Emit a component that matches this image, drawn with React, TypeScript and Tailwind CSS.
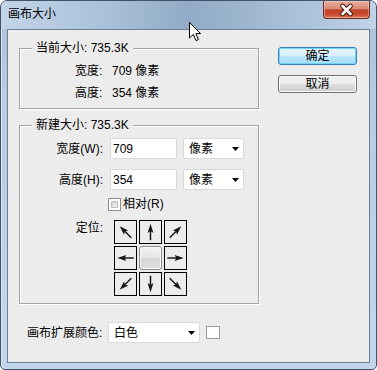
import React from 'react';

type ArrowProps = { rot: number };

const Arrow: React.FC<ArrowProps> = ({ rot }) => (
  <svg width="23" height="24" viewBox="0 0 23 24">
    <g transform={`rotate(${rot} 11.5 12)`}>
      <line x1="11.5" y1="21" x2="11.5" y2="9" stroke="#151515" strokeWidth="1.6" />
      <polygon points="11.5,3 8.3,13 11.5,11 14.7,13" fill="#151515" />
    </g>
  </svg>
);

const DropArrow = () => (
  <svg width="7" height="4" viewBox="0 0 7 4">
    <polygon points="0,0 7,0 3.5,4" fill="#000" />
  </svg>
);

const Select: React.FC<{ text: string; size: string }> = ({ text, size }) => (
  <div className={`${size} h-[21px] flex items-center justify-between rounded-[2px] border border-[#d9d9d9] bg-white pl-[5px] pr-[4px]`}>
    <span>{text}</span>
    <DropArrow />
  </div>
);

const Group: React.FC<{ title: string; height: string; children: React.ReactNode }> = ({ title, height, children }) => (
  <div className={`relative w-[240px] ${height} border border-[#a4a4a4] shadow-[inset_1px_1px_0_#fff,1px_1px_0_#fff]`}>
    <span className="absolute left-[12px] -top-[9px] px-[4px] bg-[#ececec] leading-[17px]">{title}</span>
    {children}
  </div>
);

const anchors = [-45, 0, 45, -90, null, 90, -135, 180, 135];

export default function App() {
  return (
    <div className="w-[377px] h-[370px] bg-white font-['Liberation_Sans','Noto_Sans_CJK_SC',sans-serif] text-[12px] text-black">
      <div className="relative w-[377px] h-[370px] flex flex-col rounded-t-[7px] rounded-b-[5px] border border-[#3f5268] bg-[linear-gradient(180deg,#a9c0d8_0%,#b7cce2_25%,#c3d7ec_100%)] shadow-[inset_1px_1px_0_#dbe8f5]">
        {/* title bar */}
        <div className="h-[28px] flex items-start justify-between rounded-t-[6px] bg-[linear-gradient(90deg,#c3d5e8_0%,#a7bfd7_30%,#91abc6_50%,#a3bbd4_72%,#bfd2e6_100%)]">
          <span className="ml-[7px] mt-[5px] leading-[17px]">画布大小</span>
          <div className="mr-[6px] w-[47px] h-[18px] rounded-b-[4px] border border-t-0 border-[#6b2a1c] bg-[linear-gradient(180deg,#e8ad9d_0%,#d98a74_45%,#c2432a_52%,#c64a2e_80%,#e07b5a_100%)] shadow-[inset_0_0_0_1px_rgba(255,220,210,0.45)]">
            <svg width="45" height="18" viewBox="0 0 45 18">
              <path d="M18.5 5 L26.5 13 M26.5 5 L18.5 13" stroke="#40180f" strokeWidth="4.6" strokeLinecap="round" />
              <path d="M18.5 5 L26.5 13 M26.5 5 L18.5 13" stroke="#fff" strokeWidth="2.6" strokeLinecap="round" />
            </svg>
          </div>
        </div>

        {/* client area */}
        <div className="mx-[6px] mb-[6px] flex-1 flex flex-col border border-[#6b7f95] bg-[#ececec]">
          <div className="flex">
            <div className="ml-[11px] mt-[18px] flex flex-col gap-[16px]">
              <Group title="当前大小: 735.3K" height="h-[61px]">
                <div className="pt-[11px] pl-[55px]">
                  <div className="h-[22px] flex items-center">
                    <span className="w-[37px]">宽度:</span>
                    <span>709 像素</span>
                  </div>
                  <div className="h-[22px] flex items-center">
                    <span className="w-[37px]">高度:</span>
                    <span>354 像素</span>
                  </div>
                </div>
              </Group>

              <Group title="新建大小: 735.3K" height="h-[179px]">
                <div className="pt-[12px] flex flex-col">
                  <div className="h-[21px] flex items-center">
                    <span className="w-[83px] text-right">宽度(W):</span>
                    <div className="ml-[7px] w-[67px] h-[21px] flex items-center border border-[#d9d9d9] bg-white pl-[2px]">709</div>
                    <div className="ml-[6px]"><Select text="像素" size="w-[61px]" /></div>
                  </div>
                  <div className="mt-[10px] h-[21px] flex items-center">
                    <span className="w-[83px] text-right">高度(H):</span>
                    <div className="ml-[7px] w-[67px] h-[21px] flex items-center border border-[#d9d9d9] bg-white pl-[2px]">354</div>
                    <div className="ml-[6px]"><Select text="像素" size="w-[61px]" /></div>
                  </div>
                  <div className="mt-[8px] h-[13px] pl-[88px] flex items-center">
                    <div className="w-[13px] h-[13px] border border-[#8e8f8f] bg-white p-[2px]">
                      <div className="w-full h-full border border-[#c0c0c0] bg-[linear-gradient(135deg,#cfcfcf_0%,#f5f5f5_100%)]" />
                    </div>
                    <span className="ml-[2px] leading-[17px]">相对(R)</span>
                  </div>
                  <div className="mt-[9px] flex items-start">
                    <span className="w-[83px] text-right leading-[16px]">定位:</span>
                    <div className="ml-[11px] grid grid-cols-[23px_23px_23px] gap-[2px]">
                      {anchors.map((rot, i) =>
                        rot === null ? (
                          <div key={i} className="w-[23px] h-[24px] rounded-[3px] border border-[#8a8a8a] bg-[linear-gradient(180deg,#f4f4f4_0%,#e4e4e4_50%,#d6d6d6_52%,#dcdcdc_100%)] shadow-[inset_0_0_0_1px_#fafafa]" />
                        ) : (
                          <div key={i} className="w-[23px] h-[24px] border border-black bg-[#ececec] flex items-center justify-center">
                            <Arrow rot={rot} />
                          </div>
                        )
                      )}
                    </div>
                  </div>
                </div>
              </Group>
            </div>

            <div className="ml-[19px] mt-[17px] flex flex-col gap-[10px]">
              <div className="w-[79px] h-[18px] flex items-center justify-center rounded-[3px] border border-[#3c7fb1] bg-[linear-gradient(180deg,#e5f5fd_0%,#d9f0fc_48%,#bee6fd_52%,#a7d9f5_100%)] shadow-[inset_0_0_0_1px_#6fd6fb]">
                确定
              </div>
              <div className="w-[79px] h-[18px] flex items-center justify-center rounded-[3px] border border-[#707070] bg-[linear-gradient(180deg,#f2f2f2_0%,#ebebeb_48%,#dddddd_52%,#cfcfcf_100%)] shadow-[inset_0_0_0_1px_#fcfcfc]">
                取消
              </div>
            </div>
          </div>

          <div className="mt-[18px] ml-[19px] flex items-start">
            <span className="w-[81px] h-[21px] flex items-center">画布扩展颜色:</span>
            <Select text="白色" size="w-[92px]" />
            <div className="ml-[6px] mt-[4px] w-[14px] h-[13px] border border-[#9a9a9a] bg-white" />
          </div>
        </div>

        {/* mouse pointer */}
        <svg className="absolute left-[188px] top-[21px]" width="13" height="20" viewBox="0 0 13 20">
          <path d="M0.5 0.5 L0.5 16 L4.3 12.4 L7 18.6 L9.4 17.6 L6.8 11.6 L11.6 11.6 Z" fill="#fff" stroke="#000" strokeWidth="1" strokeLinejoin="round" />
        </svg>
      </div>
    </div>
  );
}
